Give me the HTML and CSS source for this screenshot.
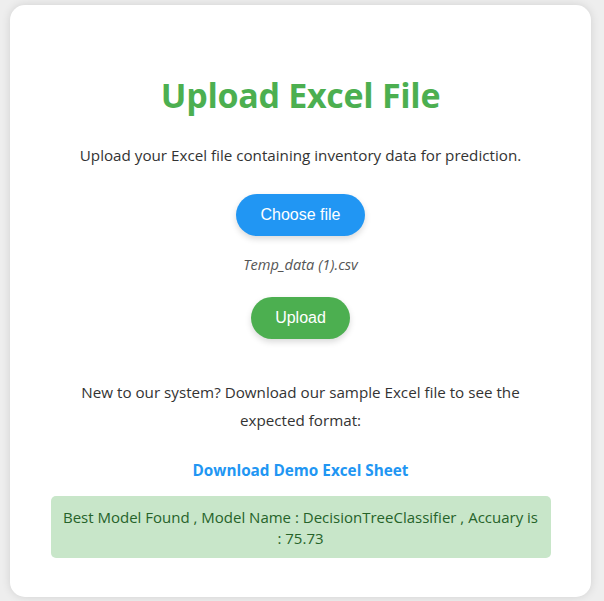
FILE: index.html
```html
<!DOCTYPE html>
<html lang="en">
<head>
<meta charset="utf-8">
<title>Upload Excel File</title>
<link rel="stylesheet" href="styles.css">
</head>
<body>
<div class="card">
  <h1 class="title">Upload Excel File</h1>
  <p class="lead">Upload your Excel file containing inventory data for prediction.</p>
  <div class="actions">
    <button class="btn btn-blue" type="button">Choose file</button>
    <p class="filename">Temp_data (1).csv</p>
    <button class="btn btn-green" type="button">Upload</button>
  </div>
  <p class="note">New to our system? Download our sample Excel file to see the expected format:</p>
  <a class="demo-link" href="#">Download Demo Excel Sheet</a>
  <div class="alert">Best Model Found , Model Name : DecisionTreeClassifier , Accuary is : 75.73</div>
</div>
</body>
</html>
```

FILE: styles.css
```css
html, body {
  margin: 0;
  padding: 0;
}
body {
  background: #eeeeee;
  padding: 5px 13px 4px 10px;
  font-family: "Open Sans", "Noto Sans", sans-serif;
  color: #333333;
}
.card {
  box-sizing: border-box;
  width: 581px;
  height: 592px;
  background: #ffffff;
  border-radius: 15px;
  box-shadow: 0 0 10px rgba(0, 0, 0, 0.12);
  padding: 40px 40px 0;
  text-align: center;
  display: flex;
  flex-direction: column;
  align-items: center;
}
.title {
  margin: 26px 0 0;
  font-size: 34px;
  line-height: 48px;
  font-weight: 700;
  color: #4caf50;
  letter-spacing: -0.3px;
}
.lead {
  margin: 24px 0 0;
  font-size: 15.2px;
  line-height: 24px;
  color: #333333;
}
.actions {
  display: flex;
  flex-direction: column;
  align-items: center;
}
.btn {
  border: none;
  border-radius: 21px;
  color: #ffffff;
  font-family: "Liberation Sans", Arial, sans-serif;
  font-size: 16px;
  line-height: 20px;
  height: 42px;
  padding: 0;
  white-space: nowrap;
  box-shadow: 0 3px 6px rgba(0, 0, 0, 0.15);
  cursor: pointer;
}
.btn-blue {
  margin-top: 27px;
  background: #2196f3;
  width: 129px;
}
.btn-green {
  margin-top: 22px;
  background: #4caf50;
  width: 99px;
}
.filename {
  margin: 17px 0 0;
  font-size: 14.6px;
  line-height: 22px;
  font-style: italic;
  color: #555555;
}
.note {
  margin: 39px 0 0;
  width: 460px;
  font-size: 15.2px;
  line-height: 28px;
  color: #333333;
}
.demo-link {
  margin-top: 26px;
  font-size: 15.3px;
  line-height: 20px;
  font-weight: 700;
  color: #2196f3;
  text-decoration: none;
}
.alert {
  box-sizing: border-box;
  margin-top: 16px;
  width: 500px;
  padding: 11px 9px 9px;
  background: #c8e6c9;
  border-radius: 5px;
  color: #26632a;
  font-size: 15px;
  line-height: 21px;
}
```
